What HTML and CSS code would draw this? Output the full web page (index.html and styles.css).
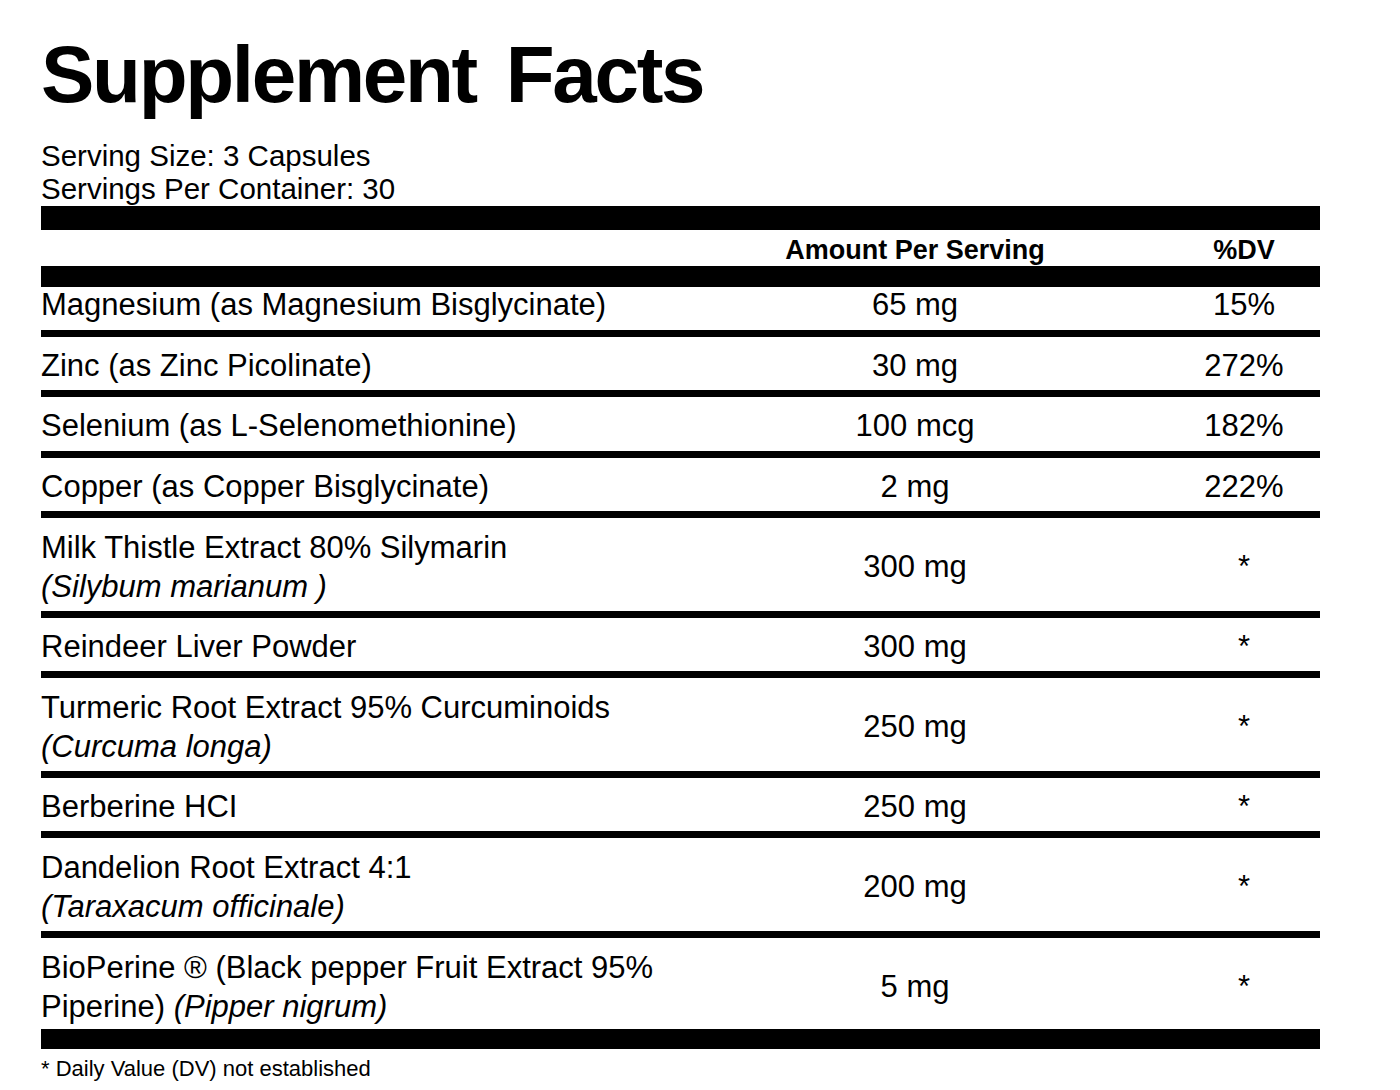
FILE: index.html
```html
<!DOCTYPE html>
<html lang="en">
<head>
<meta charset="utf-8">
<title>Supplement Facts</title>
<link rel="stylesheet" href="styles.css">
</head>
<body>
<main class="label">
  <h1 class="title">Supplement Facts</h1>
  <div class="serving">
    <p>Serving Size: 3 Capsules</p>
    <p>Servings Per Container: 30</p>
  </div>
  <div class="bar-top"></div>
  <div class="row row--head">
    <div class="name"></div>
    <div class="amt">Amount Per Serving</div>
    <div class="dv">%DV</div>
  </div>
  <div class="row row--first">
    <div class="name">Magnesium (as Magnesium Bisglycinate)</div>
    <div class="amt">65 mg</div>
    <div class="dv">15%</div>
  </div>
  <div class="row">
    <div class="name">Zinc (as Zinc Picolinate)</div>
    <div class="amt">30 mg</div>
    <div class="dv">272%</div>
  </div>
  <div class="row row--tall1">
    <div class="name">Selenium (as L-Selenomethionine)</div>
    <div class="amt">100 mcg</div>
    <div class="dv">182%</div>
  </div>
  <div class="row">
    <div class="name">Copper (as Copper Bisglycinate)</div>
    <div class="amt">2 mg</div>
    <div class="dv">222%</div>
  </div>
  <div class="row row--double">
    <div class="name name--two">Milk Thistle Extract 80% Silymarin<br><i>(Silybum marianum )</i></div>
    <div class="amt">300 mg</div>
    <div class="dv">*</div>
  </div>
  <div class="row">
    <div class="name">Reindeer Liver Powder</div>
    <div class="amt">300 mg</div>
    <div class="dv">*</div>
  </div>
  <div class="row row--double">
    <div class="name name--two">Turmeric Root Extract 95% Curcuminoids<br><i>(Curcuma longa)</i></div>
    <div class="amt">250 mg</div>
    <div class="dv">*</div>
  </div>
  <div class="row">
    <div class="name">Berberine HCI</div>
    <div class="amt">250 mg</div>
    <div class="dv">*</div>
  </div>
  <div class="row row--double">
    <div class="name name--two">Dandelion Root Extract 4:1<br><i>(Taraxacum officinale)</i></div>
    <div class="amt">200 mg</div>
    <div class="dv">*</div>
  </div>
  <div class="row row--last">
    <div class="name name--two">BioPerine ® (Black pepper Fruit Extract 95%<br>Piperine) <i>(Pipper nigrum)</i></div>
    <div class="amt">5 mg</div>
    <div class="dv">*</div>
  </div>
  <p class="footnote">* Daily Value (DV) not established</p>
</main>
</body>
</html>
```

FILE: styles.css
```css
* {
  box-sizing: border-box;
}

html, body {
  margin: 0;
  padding: 0;
  background: #ffffff;
}

body {
  font-family: "Liberation Sans", Arial, Helvetica, sans-serif;
  color: #000000;
}

.label {
  width: 1320px;
  padding-left: 41px;
}

.title {
  margin: 35px 0 0;
  font-size: 80px;
  line-height: 80px;
  font-weight: 700;
  letter-spacing: -2.3px;
  word-spacing: 10px;
}

.serving {
  margin-top: 24px;
}

.serving p {
  margin: 0;
  font-size: 29.5px;
  line-height: 33px;
}

.bar-top {
  margin-top: 1px;
  height: 24px;
  background: #000000;
}

.row {
  display: grid;
  grid-template-columns: 621px 506px 152px;
  align-items: center;
  height: 60px;
  padding-top: 4px;
  border-bottom: 7px solid #000000;
  font-size: 31px;
  line-height: 36px;
}

.row--head {
  height: 57px;
  padding-top: 4px;
  align-items: start;
  border-bottom-width: 21px;
  font-size: 27px;
  line-height: 32px;
  font-weight: 700;
}

.row--first {
  height: 50px;
  padding-top: 0;
  padding-bottom: 8px;
}

.row--tall1 {
  height: 61px;
}

.row--double {
  height: 100px;
}

.row--last {
  height: 111px;
  padding-top: 7px;
  border-bottom-width: 20px;
}

.name {
  text-align: left;
  white-space: nowrap;
}

.name--two {
  line-height: 39px;
}

.amt,
.dv {
  text-align: center;
}

.footnote {
  margin: 7px 0 0;
  font-size: 22px;
  line-height: 26px;
}
```
